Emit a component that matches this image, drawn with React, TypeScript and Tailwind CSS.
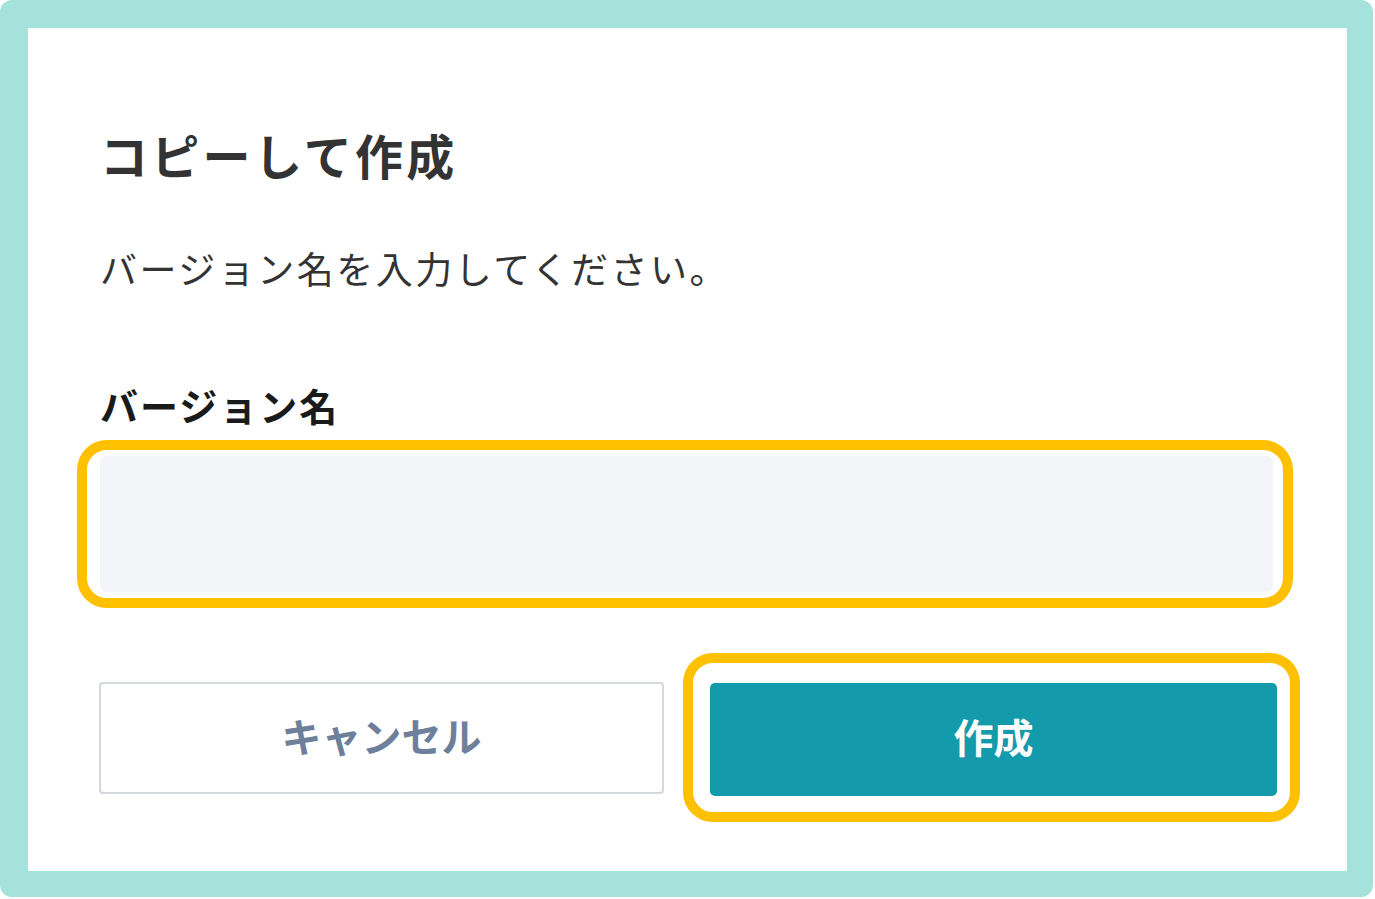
import React from "react";

const font = { fontFamily: '"Noto Sans CJK JP", "Noto Sans", sans-serif' };

const App = () => {
  return (
    <div className="w-[1375px] h-[899px] bg-white" style={font}>
      <div className="w-[1373px] h-[897px] rounded-[12px] bg-[#a6e2dc] pt-[28px] pl-[28px] pr-[26px] pb-[26px]">
        <div className="h-full bg-white flex flex-col">
          <h1 className="ml-[72px] mt-[96px] text-[48px] leading-[60px] font-bold text-[#333333] tracking-[3.3px]">
            コピーして作成
          </h1>
          <p className="ml-[72px] mt-[60px] text-[37px] leading-[48px] text-[#333333] tracking-[2.5px]">
            バージョン名を入力してください。
          </p>
          <label className="ml-[72px] mt-[89px] text-[38px] leading-[48px] font-bold text-[#1a1a1a] tracking-[2px]">
            バージョン名
          </label>

          {/* highlighted input */}
          <div className="ml-[49px] mt-[11px] w-[1216px] h-[168px] rounded-[30px] border-[10px] border-[#ffc000] pl-[13px] pr-[10px] py-[6px]">
            <input
              type="text"
              className="w-full h-full rounded-[6px] bg-[#f4f5f9] outline-none px-4 text-[32px]"
            />
          </div>

          <div className="mt-[45px] flex items-center">
            <button className="ml-[71px] w-[565px] h-[112px] rounded-[4px] border-2 border-[#d3d7de] bg-white text-[40px] font-bold text-[#6e7f9b] pb-[6px]">
              キャンセル
            </button>
            <div className="ml-[19px] w-[617px] h-[169px] rounded-[30px] border-[10px] border-[#ffc000] pl-[17px] pr-[13px] pt-[20px] pb-[16px]">
              <button className="w-full h-full rounded-[5px] bg-[#139bab] text-[40px] font-bold text-white pb-[8px]">
                作成
              </button>
            </div>
          </div>
        </div>
      </div>
    </div>
  );
};

export default App;
